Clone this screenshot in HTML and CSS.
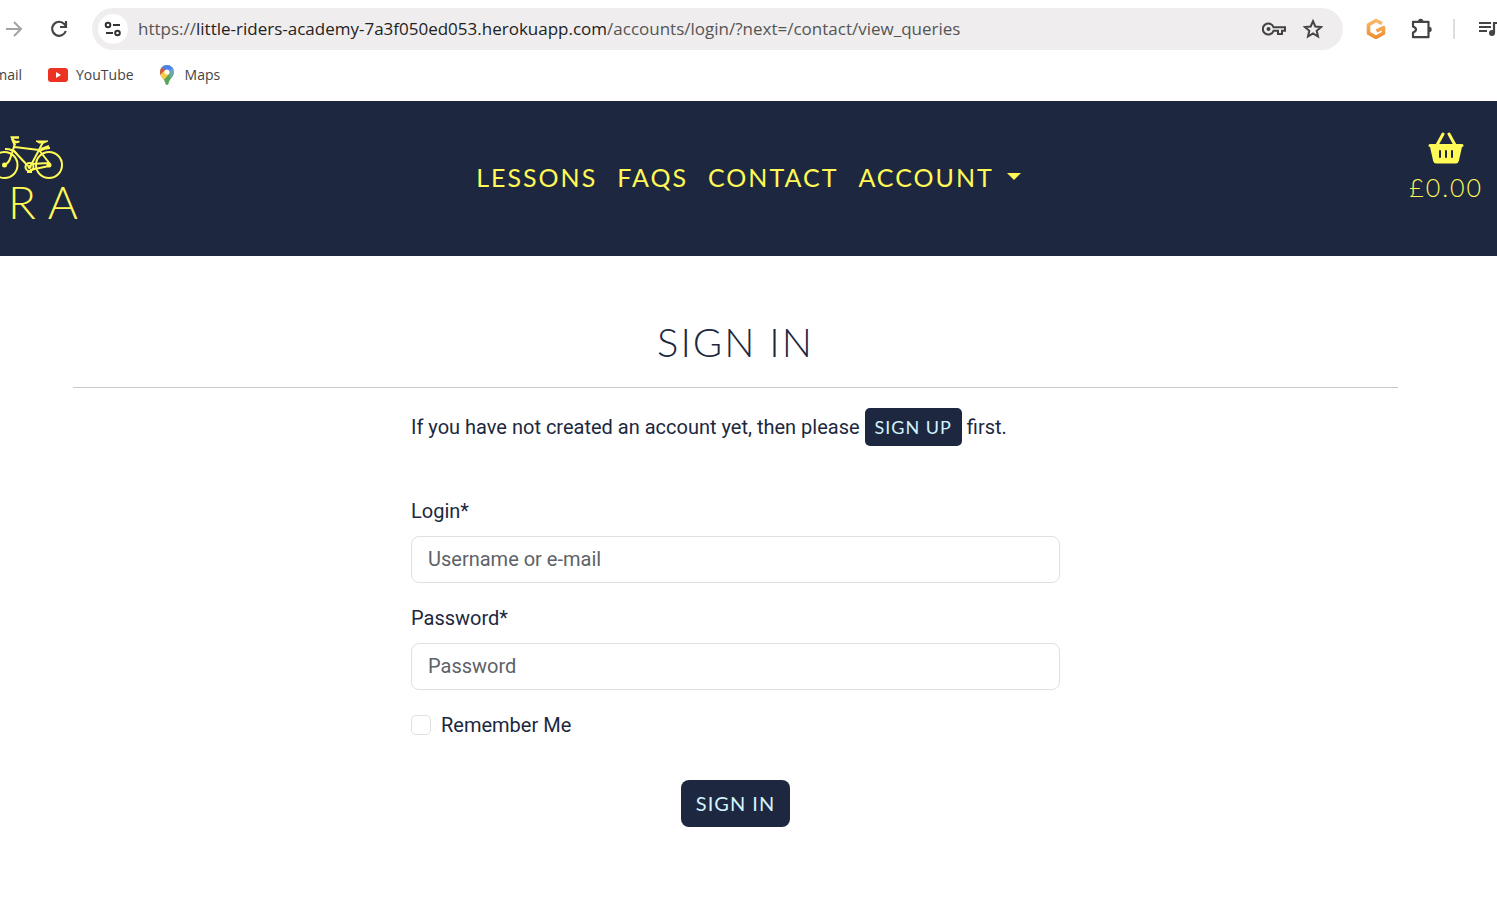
FILE: index.html
```html
<!DOCTYPE html>
<html lang="en">
<head>
<meta charset="utf-8">
<title>Sign In</title>
<link rel="stylesheet" href="styles.css">
</head>
<body>
<div class="browser">
  <div class="toolbar">
    <button class="icon-btn" aria-label="Forward"><svg width="20" height="20" viewBox="0 0 20 20" fill="none" stroke="#a3a3a3" stroke-width="2"><path d="M2 10h15M10 3l7 7-7 7"/></svg></button>
    <button class="icon-btn reload" aria-label="Reload"><svg width="20" height="20" viewBox="0 0 20 20" fill="none" stroke="#444" stroke-width="2.2"><path d="M16.8 12A7 7 0 1 1 15.3 5L17 7"/><path d="M17 2v6h-6"/></svg></button>
    <div class="address">
      <button class="site-info" aria-label="Site information"><svg width="18" height="16" viewBox="0 0 18 16" fill="none" stroke="#333" stroke-width="2"><circle cx="4" cy="4" r="2.3"/><path d="M9 4h7M2 12h7"/><circle cx="13.5" cy="12" r="2.3"/></svg></button>
      <div class="url"><span>https://</span>little-riders-academy-7a3f050ed053.herokuapp.com<span>/accounts/login/?next=/contact/view_queries</span></div>
      <button class="icon-btn" aria-label="Passwords"><svg width="24" height="16" viewBox="0 0 24 16" fill="none" stroke="#444" stroke-width="2"><path d="M11.500 6.200A5.500 5.500 0 1 0 11.500 9.800H16V13H20V9.800H23V6.200Z"/><circle cx="6.500" cy="8" r="2" fill="#444" stroke="none"/></svg></button>
      <button class="icon-btn star" aria-label="Bookmark"><svg width="20" height="20" viewBox="0 0 20 20" fill="none" stroke="#444" stroke-width="2"><path d="M10 2.200l2.300 5.300 5.800.5-4.400 3.800 1.300 5.700-5-3-5 3 1.300-5.700L1.900 8l5.800-.5z"/></svg></button>
    </div>
    <button class="icon-btn" aria-label="Extension"><svg width="20" height="22" viewBox="0 0 20 22" fill="none" stroke-linejoin="round"><defs><linearGradient id="g" x1="0" y1="0" x2="0" y2="1"><stop offset="0" stop-color="#f8b866"/><stop offset="1" stop-color="#ef8f32"/></linearGradient></defs><path d="M16 5.500L10 2.500 2.500 6.800v8.400L10 19.300l7.500-4.100V9.500L10.500 13" stroke="url(#g)" stroke-width="3.600"/></svg></button>
    <button class="icon-btn" aria-label="Extensions"><svg width="22" height="22" viewBox="0 0 22 22"><path d="M2 3.800h15.500v15.400H2v-4.700c4-1.500 4-4.500 0-6z" fill="none" stroke="#444" stroke-width="2.200" stroke-linejoin="round"/><path d="M7 3.500a2.700 2.700 0 0 1 5.400 0zM18 8.800a2.700 2.700 0 0 1 0 5.400z" fill="#444"/></svg></button>
    <span class="divider"></span>
    <button class="icon-btn media" aria-label="Media controls"><svg width="24" height="20" viewBox="0 0 24 20"><path d="M0 4h12M0 8h12M0 12h8" stroke="#444" stroke-width="2"/><circle cx="13" cy="14" r="3" fill="#444"/><path d="M15 14V4h5" fill="none" stroke="#444" stroke-width="2.200"/></svg></button>
  </div>
  <nav class="bookmarks" aria-label="Bookmarks">
    <a class="clipped" href="#">Gmail</a>
    <a href="#"><svg width="20" height="14" viewBox="0 0 20 14"><rect width="20" height="14" rx="3" fill="#ed3223"/><path d="M8 4l5 3-5 3z" fill="#fff"/></svg>YouTube</a>
    <a class="maps" href="#"><svg width="14" height="20" viewBox="0 0 14 20"><defs><clipPath id="pin"><path d="M7 0a7 7 0 0 1 7 7c0 5-5 7-5.500 12q-1.500 2-3 0C5 14 0 12 0 7a7 7 0 0 1 7-7z"/></clipPath></defs><g clip-path="url(#pin)"><path fill="#55a55a" d="M0 0h14v20H0z"/><path fill="#4e83ec" d="M1 2L7-2l8 6L7 8z"/><path fill="#dd5144" d="M0 1l5 4-5 6z"/><path fill="#f8cd46" d="M0 10l5-5 4 4-6 7z"/><path fill="#80aef8" d="M8 7l5-5 3 5-6 6z" opacity=".5"/></g><circle cx="7" cy="7" r="2.500" fill="#fff"/></svg>Maps</a>
  </nav>
</div>
<header class="site-header">
  <a class="logo" href="#" aria-label="Home">
    <svg class="bike" width="80" height="46" viewBox="-16 0 80 46" fill="none" stroke="#fffa56" stroke-width="2">
      <circle cx="4.500" cy="29" r="13"/><circle cx="49" cy="29" r="13"/>
      <path d="M4.500 29C10 27 10 22 12 17L14.500 9M14.500 11L39 14M13 14L28 30M43 6L39 14 30 31M39 14L50 28M31 28L49 27M30 34L49 30"/>
      <path d="M19 5c-1 2-5 1-6-1l-1-2.500h7M12 2.500l3 7" stroke-width="2.400"/><path d="M36 5h12l-4 2h-5z" fill="#fffa56" stroke-width="1"/>
      <path d="M5 13c6 0 9 1 12 5M39 15c4-2 7-3 11-3M41 13l8-3"/>
      <circle cx="29.500" cy="31" r="4"/><circle cx="29.500" cy="31" r="1"/><circle cx="4.500" cy="29" r="1.500" fill="#fffa56"/><circle cx="49" cy="29" r="1.500" fill="#fffa56"/><path d="M27 36h5"/>
    </svg>
    <span class="logo-text"><span>R</span><span>A</span></span>
  </a>
  <nav class="main-nav">
    <a href="#">LESSONS</a>
    <a href="#">FAQS</a>
    <a href="#">CONTACT</a>
    <button class="account">ACCOUNT<span class="caret"></span></button>
  </nav>
  <a class="basket" href="#">
    <svg width="36" height="32" viewBox="0 0 36 32"><path fill="#fffa56" fill-rule="evenodd" d="M2 12h32q1.500 0 1.500 1.500T34 15l-3.200 14q-.6 2.500-3 2.500H8.200q-2.400 0-3-2.500L2 15Q.5 15 .5 13.500T2 12zM11 19v6q0 1 1 1t1-1v-6q0-1-1-1t-1 1zm6 0v6q0 1 1 1t1-1v-6q0-1-1-1t-1 1zm6 0v6q0 1 1 1t1-1v-6q0-1-1-1t-1 1z"/><path d="M15 2L9 13M21 2l6 11" stroke="#fffa56" stroke-width="3" stroke-linecap="round"/></svg>
    <span>£0.00</span>
  </a>
</header>
<main class="content">
  <h1>SIGN IN</h1>
  <hr>
  <form class="login">
    <p>If you have not created an account yet, then please <a class="btn small" href="#">SIGN UP</a> first.</p>
    <label class="field-label" for="login">Login*</label>
    <input class="field" id="login" type="text" placeholder="Username or e-mail">
    <label class="field-label" for="password">Password*</label>
    <input class="field" id="password" type="password" placeholder="Password">
    <div class="remember"><input id="remember" type="checkbox"><label for="remember">Remember Me</label></div>
    <button class="btn submit" type="submit">SIGN IN</button>
  </form>
</main>
</body>
</html>
```
FILE: styles.css
```css
* { box-sizing: border-box; }
body {
  margin: 0;
  background: #fff;
  color: #1d2840;
  font-family: Roboto, sans-serif;
  font-size: 20px;
  line-height: 30px;
  overflow-x: hidden;
}
a { color: inherit; text-decoration: none; }
button { font: inherit; color: inherit; border: 0; background: none; padding: 0; cursor: pointer; }
svg { display: block; flex: none; }

.browser { font-family: "Open Sans", "Noto Sans", sans-serif; color: #222; overflow: hidden; }
.toolbar { display: flex; align-items: center; height: 58px; padding-left: 4px; }
.icon-btn { flex: none; }
.address {
  flex: 1;
  display: flex;
  align-items: center;
  height: 42px;
  margin: 0 23px;
  padding: 0 20px 0 6px;
  border-radius: 21px;
  background: #efedee;
}
.site-info {
  display: grid;
  place-items: center;
  flex: none;
  width: 30px;
  height: 30px;
  border-radius: 50%;
  background: #fff;
}
.url { flex: 1; margin-left: 10px; font-size: 17px; white-space: nowrap; }
.url span { color: #555; }
.star { margin-left: 17px; }
.toolbar > .icon-btn + .icon-btn { margin-left: 25px; }
.divider { width: 2px; height: 20px; margin: 0 24px 0 20px; background: #dedede; }
.media { width: 18px; overflow: hidden; }
.bookmarks {
  display: flex;
  align-items: center;
  gap: 26px;
  height: 43px;
  padding-bottom: 9px;
  font-size: 14px;
  color: #444;
}
.bookmarks a { display: flex; align-items: center; gap: 8px; }
.bookmarks .maps { gap: 11px; }
.bookmarks .clipped { width: 22px; justify-content: flex-end; }

.site-header {
  display: grid;
  grid-template-columns: 1fr auto 1fr;
  align-items: center;
  min-height: 155px;
  background: #1d2840;
  color: #fffa56;
  font-family: Lato, sans-serif;
  font-weight: 300;
}
.logo { display: flex; flex-direction: column; align-items: flex-end; width: 78px; }
.bike { margin-right: 14px; }
.logo-text { display: flex; gap: 12px; font-size: 46px; line-height: 40px; }
.main-nav { display: flex; gap: 20px; padding-bottom: 4px; font-size: 25px; font-weight: 400; letter-spacing: 2px; }
.main-nav button { letter-spacing: inherit; }
.account { display: flex; align-items: center; }
.caret {
  margin-left: 13px;
  border: 7px solid transparent;
  border-top-color: #fffa56;
  border-bottom: 0;
}
.basket {
  justify-self: end;
  display: flex;
  flex-direction: column;
  align-items: center;
  gap: 8px;
  margin: 0 14px 24px 0;
  font-size: 25px;
  letter-spacing: 2px;
}

.content { padding: 62px 99px 48px 73px; }
h1 {
  margin: 0;
  font-family: Lato, sans-serif;
  font-size: 40px;
  font-weight: 300;
  line-height: 48px;
  letter-spacing: 2px;
  text-align: center;
}
hr { height: 1px; margin: 21px 0 20px; border: 0; background: #c6c8ca; }
.login { max-width: 649px; margin: 0 auto; }
.login p { margin: 0 0 50px; }
.btn {
  display: inline-block;
  background: #1d2840;
  color: #d4f3ff;
  font-family: Lato, sans-serif;
  font-weight: 400;
  letter-spacing: 1px;
}
.btn.small { padding: 4px 10px; border-radius: 5px; font-size: 18px; }
.field-label { display: block; margin-bottom: 10px; }
.field {
  display: block;
  width: 100%;
  height: 47px;
  margin-bottom: 20px;
  padding: 0 16px 2px;
  border: 1px solid #dee0e6;
  border-radius: 8px;
  background: #fff;
  color: inherit;
  font: inherit;
}
.field::placeholder { color: #5d6268; opacity: 1; }
.remember { display: flex; align-items: center; gap: 10px; }
.remember input {
  appearance: none;
  width: 20px;
  height: 20px;
  margin: 0;
  border: 1px solid #dee0e6;
  border-radius: 5px;
}
.submit { display: block; margin: 40px auto 0; padding: 8px 15px 9px; border-radius: 8px; font-size: 20px; }
```
